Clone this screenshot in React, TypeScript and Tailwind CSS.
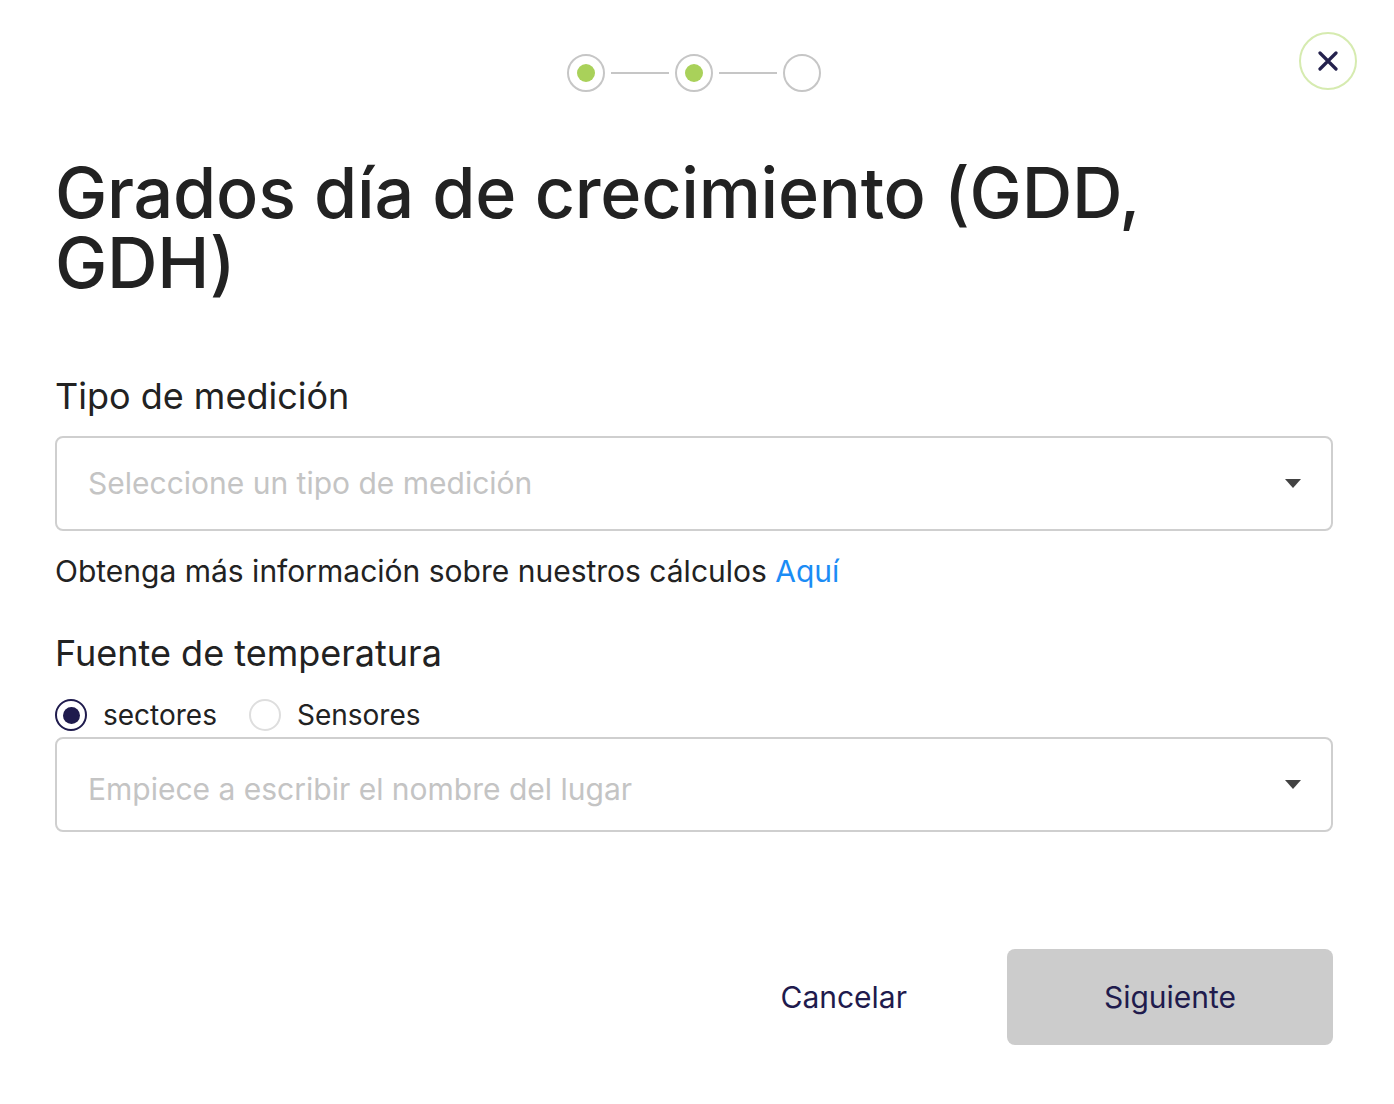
import { useState } from "react";

function StepDot({ done }: { done: boolean }) {
  return (
    <div className="flex h-[38px] w-[38px] items-center justify-center rounded-full border-2 border-[#c6c6c6] bg-white">
      {done && <div className="h-[18px] w-[18px] rounded-full bg-[#a9d15a]" />}
    </div>
  );
}

function Stepper({ current }: { current: number }) {
  return (
    <div className="flex items-center justify-center">
      {[0, 1, 2].map((i) => (
        <div key={i} className="flex items-center">
          {i > 0 && <div className="mx-[6px] h-[2px] w-[58px] bg-[#c6c6c6]" />}
          <StepDot done={i < current} />
        </div>
      ))}
    </div>
  );
}

function Caret() {
  return (
    <svg width="16" height="9" viewBox="0 0 16 9" className="shrink-0">
      <path d="M0 0h16L8 9z" fill="#424242" />
    </svg>
  );
}

function SelectBox({ placeholder, textOffset = "" }: { placeholder: string; textOffset?: string }) {
  return (
    <button
      type="button"
      className="flex h-[95px] w-full items-center justify-between rounded-[8px] border-2 border-[#cfcfcf] bg-white pl-[31px] pr-[30px] text-left"
    >
      <span className={"text-[30px] text-[#c4c4c4] " + textOffset}>{placeholder}</span>
      <Caret />
    </button>
  );
}

function Radio({
  checked,
  label,
  onClick,
}: {
  checked: boolean;
  label: string;
  onClick: () => void;
}) {
  return (
    <button type="button" onClick={onClick} className="flex items-center gap-[16px]">
      <span
        className={
          checked
            ? "flex h-[32px] w-[32px] items-center justify-center rounded-full border-2 border-[#1f1b4d]"
            : "flex h-[32px] w-[32px] items-center justify-center rounded-full border-2 border-[#dedede]"
        }
      >
        {checked && <span className="h-[17px] w-[17px] rounded-full bg-[#1f1b4d]" />}
      </span>
      <span className="text-[28px] text-[#222]">{label}</span>
    </button>
  );
}

export default function App() {
  const [source, setSource] = useState<"sectores" | "sensores">("sectores");

  return (
    <div
      className="min-h-[1104px] w-[1394px] bg-white text-[#222]"
      style={{ fontFamily: "Inter, 'Noto Sans', sans-serif" }}
    >
      <div className="relative pl-[55px] pr-[61px] pt-[54px]">
        <Stepper current={2} />
        <button
          type="button"
          aria-label="Cerrar"
          className="absolute right-[37px] top-[32px] flex h-[58px] w-[58px] items-center justify-center rounded-full border-2 border-[#d6ebb0] bg-white text-[#24214d]"
        >
          <svg width="20" height="20" viewBox="0 0 20 20">
            <path d="M2 2l16 16M18 2L2 18" stroke="currentColor" strokeWidth="3.2" strokeLinecap="round" />
          </svg>
        </button>

        <h1 className="mt-[66px] pr-[120px] text-[70px] font-medium leading-[70px] tracking-[-0.25px] text-[#222]">
          Grados día de crecimiento (GDD, GDH)
        </h1>

        <h2 className="mt-[76px] text-[36px] font-normal leading-[44px]">Tipo de medición</h2>
        <div className="mt-[18px]">
          <SelectBox placeholder="Seleccione un tipo de medición" />
        </div>
        <p className="mt-[20px] text-[30px] leading-[40px]">
          Obtenga más información sobre nuestros cálculos{" "}
          <a href="#" className="text-[#1b8cf5]">
            Aquí
          </a>
        </p>

        <h2 className="mt-[40px] text-[36px] font-normal leading-[44px]">Fuente de temperatura</h2>
        <div className="mt-[19px] flex items-center gap-[32px]">
          <Radio checked={source === "sectores"} label="sectores" onClick={() => setSource("sectores")} />
          <Radio checked={source === "sensores"} label="Sensores" onClick={() => setSource("sensores")} />
        </div>
        <div className="mt-[1px]">
          <SelectBox placeholder="Empiece a escribir el nombre del lugar" textOffset="pt-[10px]" />
        </div>

        <div className="mt-[117px] flex items-center justify-end gap-[100px]">
          <button type="button" className="text-[30px] text-[#1f1b4d]">
            Cancelar
          </button>
          <button
            type="button"
            className="flex h-[96px] w-[326px] items-center justify-center rounded-[8px] bg-[#cccccc] text-[30px] text-[#1f1b4d]"
          >
            Siguiente
          </button>
        </div>
      </div>
    </div>
  );
}
